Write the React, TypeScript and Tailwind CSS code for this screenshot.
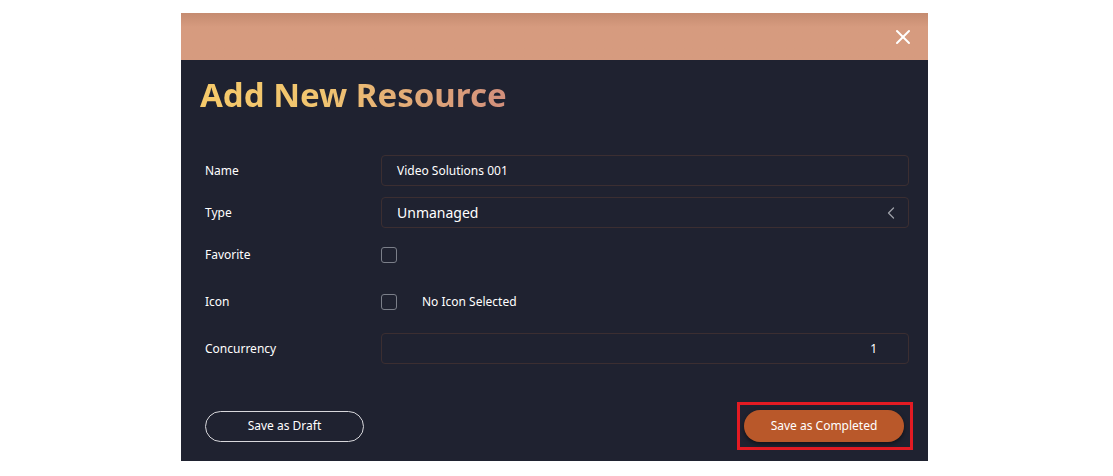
import { X, ChevronLeft } from "lucide-react";

function FieldRow({
  label,
  className,
  children,
}: {
  label: string;
  className?: string;
  children: React.ReactNode;
}) {
  return (
    <div className={`flex items-center ${className ?? ""}`}>
      <div className="w-[176px] shrink-0 text-[12px] text-white">{label}</div>
      <div className="flex flex-1 items-center">{children}</div>
    </div>
  );
}

function Checkbox() {
  return (
    <span className="block h-4 w-4 rounded-[3px] border border-[#7b7f89] bg-transparent" />
  );
}

export default function App() {
  return (
    <div className="min-h-screen bg-white pt-[13px] font-['Noto_Sans',sans-serif]">
      <div className="ml-[181px] w-[747px]">
        {/* header band */}
        <div className="flex h-[47px] items-center justify-end bg-gradient-to-b from-[#c58b70] via-[#d69b7f] via-30% to-[#d69b7f] pr-[13px]">
          <X className="h-[24px] w-[24px] text-white" strokeWidth={2} />
        </div>

        {/* body */}
        <div className="h-[401px] bg-[#1f2230] px-[19px]">
          <h1 className="pt-[12px] text-[33px] font-bold leading-[46px]">
            <span className="bg-gradient-to-r from-[#f6ca6a] via-[#f0c470] via-40% to-[#d28f7c] bg-clip-text text-transparent">
              Add New Resource
            </span>
          </h1>

          <div className="pl-[5px]">
            <FieldRow label="Name" className="mt-[37px] h-[31px]">
              <div className="flex h-[31px] w-full items-center rounded-[4px] border border-[#3b2e31] px-[15px] text-[12px] text-white">
                Video Solutions 001
              </div>
            </FieldRow>

            <FieldRow label="Type" className="mt-[11px] h-[31px]">
              <div className="flex h-[31px] w-full items-center justify-between rounded-[4px] border border-[#3b2e31] pl-[15px] pr-[7px] text-[14px] text-white">
                <span>Unmanaged</span>
                <ChevronLeft className="h-[20px] w-[20px] text-[#9da0a8]" strokeWidth={1.5} />
              </div>
            </FieldRow>

            <FieldRow label="Favorite" className="mt-[11px] h-[31px]">
              <Checkbox />
            </FieldRow>

            <FieldRow label="Icon" className="mt-[16px] h-[31px]">
              <Checkbox />
              <span className="ml-[25px] text-[12px] text-white">No Icon Selected</span>
            </FieldRow>

            <FieldRow label="Concurrency" className="mt-[16px] h-[31px]">
              <div className="flex h-[31px] w-full items-center justify-end rounded-[4px] border border-[#3b2e31] px-[31px] text-[12px] text-white">
                1
              </div>
            </FieldRow>

            <div className="mt-[38px] flex items-center justify-between">
              <button className="h-[31px] w-[159px] rounded-full border border-[#d8d8dc] text-[12px] text-white">
                Save as Draft
              </button>
              <div className="mr-[-4px] border-[3px] border-[#e31b23] py-[5px] pl-[4px] pr-[6px]">
                <button className="h-[32px] w-[160px] rounded-full bg-[#b9582a] text-[12px] text-white shadow-[0_2px_4px_rgba(0,0,0,0.5)]">
                  Save as Completed
                </button>
              </div>
            </div>
          </div>
        </div>
      </div>
    </div>
  );
}
